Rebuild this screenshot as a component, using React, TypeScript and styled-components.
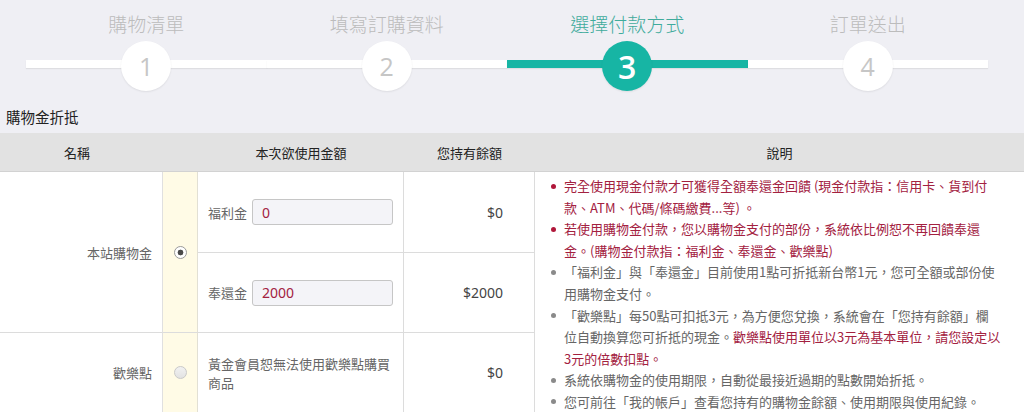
import React from "react";
import styled, { createGlobalStyle } from "styled-components";

const GlobalStyle = createGlobalStyle`
  * { box-sizing: border-box; }
  body {
    margin: 0;
    background: #efeff4;
    font-family: "Noto Sans CJK TC", "Noto Sans", sans-serif;
  }
`;

const TEAL = "#17b5a4";
const RED = "#a3213f";

const Stepper = styled.ol`
  list-style: none;
  margin: 0;
  padding: 11px 0 0 26px;
  display: flex;
`;

const Step = styled.li`
  flex: 0 0 240.5px;
  display: flex;
  flex-direction: column;
  align-items: center;
`;

const StepLabel = styled.div<{ $active?: boolean }>`
  height: 26px;
  line-height: 26px;
  margin-bottom: 4px;
  font-size: 19px;
  font-weight: 300;
  color: ${(p) => (p.$active ? "#3fab9c" : "#bcbcbc")};
`;

const Track = styled.div<{ $active?: boolean }>`
  position: relative;
  align-self: stretch;
  height: 50px;
  display: flex;
  justify-content: center;

  &::before {
    content: "";
    position: absolute;
    left: 0;
    right: 0;
    top: 19px;
    height: 8px;
    background: ${(p) => (p.$active ? TEAL : "#ffffff")};
    box-shadow: 0 1px 1px rgba(0, 0, 0, 0.07);
  }
`;

const Circle = styled.div<{ $active?: boolean }>`
  position: relative;
  width: 50px;
  height: 50px;
  border-radius: 50%;
  display: flex;
  align-items: center;
  justify-content: center;
  background: ${(p) => (p.$active ? TEAL : "#ffffff")};
  color: ${(p) => (p.$active ? "#ffffff" : "#c6c6c6")};
  font-family: "Open Sans", sans-serif;
  font-size: ${(p) => (p.$active ? "32px" : "25px")};
  font-weight: ${(p) => (p.$active ? 600 : 400)};
  box-shadow: 0 1px 2px rgba(0, 0, 0, 0.08);
`;

const SectionTitle = styled.h2`
  margin: 0;
  padding: 16px 6px 6px;
  font-size: 14.5px;
  line-height: 20px;
  font-weight: 400;
  color: #222;
`;

const Table = styled.div`
  display: grid;
  grid-template-columns: 163px 35px 206px 131px 1fr;
  grid-template-rows: 39px 81px 80px 80px;
  background: #ffffff;
  font-size: 13px;
`;

const HeadCell = styled.div<{ $shift?: number }>`
  display: flex;
  align-items: center;
  justify-content: center;
  padding-right: ${(p) => p.$shift ?? 0}px;
  background: #e2e2e2;
  border-bottom: 1px solid #d2d2d2;
  color: #222;
`;

const NameCell = styled.div<{ $rows?: number }>`
  grid-row: span ${(p) => p.$rows ?? 1};
  display: flex;
  align-items: center;
  justify-content: flex-end;
  padding-right: 10px;
  border-right: 1px solid #e0e0e0;
  border-bottom: 1px solid #dcdcdc;
  color: #666;
`;

const RadioCell = styled.div<{ $rows?: number }>`
  grid-row: span ${(p) => p.$rows ?? 1};
  display: flex;
  align-items: center;
  justify-content: center;
  background: #fffbe6;
  border-right: 1px solid #e2e0d4;
  border-bottom: 1px solid #dcdcdc;
`;

const Radio = styled.span<{ $checked?: boolean }>`
  width: 13px;
  height: 13px;
  border-radius: 50%;
  border: 1px solid ${(p) => (p.$checked ? "#9a9a9a" : "#c9c9c9")};
  background: ${(p) =>
    p.$checked
      ? "radial-gradient(circle, #4a4a4a 0 2.6px, #ffffff 3.2px)"
      : "linear-gradient(#f2f2f2, #e2e2e2)"};
`;

const AmountCell = styled.div`
  display: flex;
  align-items: center;
  gap: 5px;
  padding: 0 10px;
  border-right: 1px solid #dcdcdc;
  border-bottom: 1px solid #dcdcdc;
  color: #666;
  line-height: 19px;
`;

const AmountInput = styled.input`
  width: 141px;
  height: 26px;
  padding: 0 9px;
  border: 1px solid #c6c6c6;
  border-radius: 3px;
  background: #f4f4f8;
  font-family: "Noto Sans", sans-serif;
  font-size: 14px;
  color: ${RED};
  outline: none;
`;

const BalanceCell = styled.div`
  display: flex;
  align-items: center;
  justify-content: flex-end;
  padding-right: 31px;
  border-right: 1px solid #dcdcdc;
  border-bottom: 1px solid #dcdcdc;
  font-family: "Noto Sans", sans-serif;
  font-size: 14px;
  color: #444;
`;

const NoteCell = styled.div`
  grid-row: span 3;
  padding: 3px 10px 0 29px;
`;

const NoteList = styled.ul`
  list-style: none;
  margin: 0;
  padding: 0;
  font-size: 13px;
  line-height: 21.6px;
  white-space: nowrap;
`;

const NoteItem = styled.li<{ $warn?: boolean }>`
  position: relative;
  color: ${(p) => (p.$warn ? RED : "#666")};

  &::before {
    content: "";
    position: absolute;
    left: -13px;
    top: 8.5px;
    width: 5px;
    height: 5px;
    border-radius: 50%;
    background: ${(p) => (p.$warn ? "#b0173a" : "#8a8a8a")};
  }
`;

const Warn = styled.span`
  color: ${RED};
`;

const steps = ["購物清單", "填寫訂購資料", "選擇付款方式", "訂單送出"];

export default function App() {
  return (
    <>
      <GlobalStyle />
      <Stepper>
        {steps.map((label, i) => {
          const active = i === 2;
          return (
            <Step key={label}>
              <StepLabel $active={active}>{label}</StepLabel>
              <Track $active={active}>
                <Circle $active={active}>{i + 1}</Circle>
              </Track>
            </Step>
          );
        })}
      </Stepper>

      <SectionTitle>購物金折抵</SectionTitle>

      <Table>
        <HeadCell $shift={9}>名稱</HeadCell>
        <HeadCell />
        <HeadCell>本次欲使用金額</HeadCell>
        <HeadCell>您持有餘額</HeadCell>
        <HeadCell>說明</HeadCell>

        <NameCell $rows={2}>本站購物金</NameCell>
        <RadioCell $rows={2}>
          <Radio $checked />
        </RadioCell>
        <AmountCell>
          福利金
          <AmountInput defaultValue="0" />
        </AmountCell>
        <BalanceCell>$0</BalanceCell>
        <NoteCell>
          <NoteList>
            <NoteItem $warn>
              完全使用現金付款才可獲得全額奉還金回饋 (現金付款指：信用卡、貨到付
              <br />
              款、ATM、代碼/條碼繳費...等) 。
            </NoteItem>
            <NoteItem $warn>
              若使用購物金付款，您以購物金支付的部份，系統依比例恕不再回饋奉還
              <br />
              金。(購物金付款指：福利金、奉還金、歡樂點)
            </NoteItem>
            <NoteItem>
              「福利金」與「奉還金」目前使用1點可折抵新台幣1元，您可全額或部份使
              <br />
              用購物金支付。
            </NoteItem>
            <NoteItem>
              「歡樂點」每50點可扣抵3元，為方便您兌換，系統會在「您持有餘額」欄
              <br />
              位自動換算您可折抵的現金。
              <Warn>
                歡樂點使用單位以3元為基本單位，請您設定以
                <br />
                3元的倍數扣點。
              </Warn>
            </NoteItem>
            <NoteItem>系統依購物金的使用期限，自動從最接近過期的點數開始折抵。</NoteItem>
            <NoteItem>您可前往「我的帳戶」查看您持有的購物金餘額、使用期限與使用紀錄。</NoteItem>
          </NoteList>
        </NoteCell>

        <AmountCell>
          奉還金
          <AmountInput defaultValue="2000" />
        </AmountCell>
        <BalanceCell>$2000</BalanceCell>

        <NameCell>歡樂點</NameCell>
        <RadioCell>
          <Radio />
        </RadioCell>
        <AmountCell>黃金會員恕無法使用歡樂點購買商品</AmountCell>
        <BalanceCell>$0</BalanceCell>
      </Table>
    </>
  );
}
